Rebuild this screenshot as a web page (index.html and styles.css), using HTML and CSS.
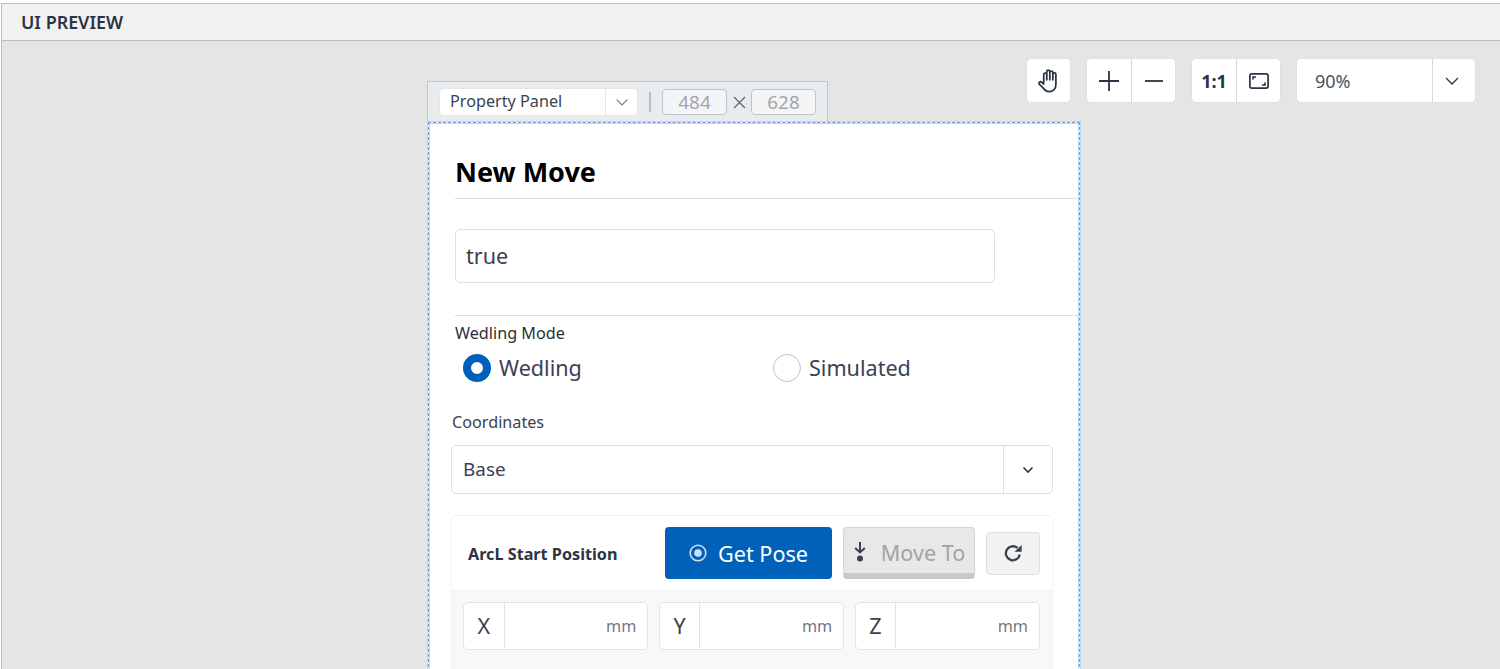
FILE: index.html
```html
<!DOCTYPE html>
<html lang="en">
<head>
<meta charset="utf-8">
<title>UI Preview</title>
<link rel="stylesheet" href="styles.css">
</head>
<body>
<div class="app">
  <header class="head">UI PREVIEW</header>
  <main class="canvas">
    <div class="tools">
      <div class="group"><button class="tool w43"><svg width="26" height="28" viewBox="0 0 22 24" fill="none" stroke="#2b3445" stroke-width="1.5" stroke-linecap="round" stroke-linejoin="round"><path d="M6.5 13V6.5a1.3 1.3 0 0 1 2.6 0V4a1.3 1.3 0 0 1 2.6 0v.8a1.3 1.3 0 0 1 2.6 0v1.6a1.3 1.3 0 0 1 2.6 0V15c0 3.6-2.4 6-5.6 6-2.6 0-4-1-5.300-3L2.600 14.600c-.8-1.400 1-2.600 2.200-1.500L6.500 14.600M9.100 6.500V11M11.700 4.800V11M14.300 6.400V11"/></svg></button></div>
      <div class="group"><button class="tool w44"><svg width="20" height="20" viewBox="0 0 20 20" stroke="#2b3445" stroke-width="1.800"><path d="M10 0v20M0 10h20"/></svg></button><button class="tool w44 sep"><svg width="18" height="20" viewBox="0 0 18 20" stroke="#2b3445" stroke-width="1.800"><path d="M0 10h18"/></svg></button></div>
      <div class="group"><button class="tool w44 ratio">1:1</button><button class="tool w44 sep"><svg width="20" height="16" viewBox="0 0 20 16" fill="none" stroke="#2b3445" stroke-width="1.700"><rect x=".9" y=".9" width="18.200" height="14.200" rx="2"/><path d="M4 6.500V4h3M16 9.500V12h-3"/></svg></button></div>
      <div class="group zoom"><span class="zoom-val">90%</span><button class="tool zoom-arrow sep"><svg width="14" height="8" viewBox="0 0 14 8" fill="none" stroke="#2b3445" stroke-width="1.300"><path d="M1 1l6 6 6-6"/></svg></button></div>
    </div>

    <div class="board">
      <div class="tagbar">
        <div class="picker"><span class="picker-text">Property Panel</span><span class="picker-arrow"><svg width="12" height="7" viewBox="0 0 12 7" fill="none" stroke="#6b7488" stroke-width="1.100"><path d="M.7.7 6 6l5.300-5.300"/></svg></span></div>
        <span class="pipe"></span>
        <span class="size">484</span>
        <svg class="times" width="13" height="13" viewBox="0 0 13 13" stroke="#5b6270" stroke-width="1.200"><path d="M1 1l11 11M12 1L1 12"/></svg>
        <span class="size">628</span>
      </div>
      <div class="panel">
        <h1 class="title">New Move</h1>
        <div class="text-field">true</div>
        <hr class="rule">
        <div class="mode-label">Wedling Mode</div>
        <div class="radios">
          <label class="radio"><span class="dot on"></span>Wedling</label>
          <label class="radio"><span class="dot"></span>Simulated</label>
        </div>
        <div class="coord-label">Coordinates</div>
        <div class="select"><span class="select-text">Base</span><span class="select-arrow"><svg width="12" height="8" viewBox="0 0 12 8" fill="none" stroke="#2b3445" stroke-width="1.600"><path d="M1.500 1.500 6 6l4.500-4.500"/></svg></span></div>
        <section class="card">
          <div class="card-head">
            <span class="card-title">ArcL Start Position</span>
            <button class="btn primary"><svg width="18" height="18" viewBox="0 0 18 18"><circle cx="9" cy="9" r="7.800" fill="none" stroke="#cfe0f3" stroke-width="1.600"/><circle cx="9" cy="9" r="3.800" fill="#cfe0f3"/></svg>Get Pose</button>
            <button class="btn disabled"><svg width="14" height="20" viewBox="0 0 14 20" fill="none" stroke="#3a4150" stroke-width="2"><path d="M7 0v11M2.200 6 7 10.500 11.800 6"/><circle cx="7" cy="16.500" r="3" fill="#3a4150" stroke="none"/></svg>Move To</button>
            <button class="btn refresh"><svg width="20" height="20" viewBox="0 0 20 20" fill="none" stroke="#3a4150" stroke-width="2.300"><path d="M16.800 11.500A7 7 0 1 1 14.500 5"/><path d="M11.500 8.700h7.200V2z" fill="#3a4150" stroke="none"/></svg></button>
          </div>
          <div class="card-body">
            <div class="axis"><span class="axis-name">X</span><span class="axis-unit">mm</span></div>
            <div class="axis"><span class="axis-name">Y</span><span class="axis-unit">mm</span></div>
            <div class="axis"><span class="axis-name">Z</span><span class="axis-unit">mm</span></div>
          </div>
        </section>
      </div>
    </div>
  </main>
</div>
</body>
</html>
```

FILE: styles.css
```css
* { box-sizing: border-box; }
html, body { margin: 0; height: 100%; overflow: hidden; }
body { font-family: "Noto Sans", sans-serif; color: #2b3445; background: #fff; }
button { font-family: inherit; padding: 0; margin: 0; border: 0; background: none; color: inherit; }

.app { height: 669px; padding: 3px 0 0 1px; display: flex; flex-direction: column; }
.head {
  height: 38px; flex: none; background: #f1f1f1;
  border-top: 1px solid #bcbcbc; border-bottom: 1px solid #bcbcbc; border-left: 1px solid #bcbcbc;
  padding: 0 0 0 19px; font-size: 17.9px; font-weight: 600; line-height: 36px; color: #2b3445;
}
.canvas { flex: 1; position: relative; background: #e5e5e5; border-left: 1px solid #bcbcbc; overflow: hidden; }

.tools { position: absolute; top: 17px; right: 24px; display: flex; gap: 15px; }
.group { display: flex; height: 45px; background: #fff; border: 1px solid #dde1e6; border-radius: 5px; }
.tool { display: flex; align-items: center; justify-content: center; height: 100%; }
.w43 { width: 43px; }
.w44 { width: 44px; }
.sep { border-left: 1px solid #d4d9e0; }
.ratio { font-size: 18px; font-weight: 700; }
.zoom { width: 180px; }
.zoom-val { flex: 1; padding: 2px 0 0 18px; font-size: 18px; line-height: 41px; color: #4a5263; }
.zoom-arrow { width: 43px; padding: 1px 4px 0 0; }

.board { position: absolute; left: 425px; top: 40px; width: 653px; }
.tagbar {
  width: 401px; height: 41px; background: #e9ecef; border: 1px solid #c6c8cb; border-bottom: 0;
  display: flex; align-items: center; padding: 0 11px;
}
.picker { width: 199px; height: 28px; background: #fff; border: 1px solid #e3e6ea; border-radius: 4px; display: flex; }
.picker-text { flex: 1; padding-left: 10px; font-size: 16.2px; line-height: 25px; color: #3c4350; }
.picker-arrow { width: 32px; border-left: 1px solid #e4e7eb; display: flex; align-items: center; justify-content: center; }
.pipe { width: 2px; height: 20px; background: #b8bbc0; margin: 0 11px 0 11px; }
.size {
  width: 65px; height: 26px; border: 1px solid #c0c3c8; border-radius: 4px; background: #f4f5f6;
  text-align: center; font-size: 18.9px; line-height: 25px; color: #a3a6ab;
}
.times { margin: 0 5px 0 6px; }

.panel {
  margin-left: 1px; height: 560px; background: #fff; padding: 0 1px 0 0;
  border: 1px dashed #6a9fdb; outline: 1px solid #b5d8fa;
  box-shadow: inset 0 0 0 1px #b5d8fa;
}
.title {
  margin: 0 0 0 26px; height: 76px; padding-top: 28px; font-size: 27px; line-height: 42px; font-weight: 700; color: #000;
  border-bottom: 1px solid #dcdcdc;
}
.text-field {
  width: 540px; height: 54px; margin: 30px 0 0 26px; border: 1px solid #dcdfe4; border-radius: 5px;
  padding-left: 10px; font-size: 21.6px; line-height: 52px; color: #3a4252;
}
.rule { margin: 32px 0 0 26px; height: 1px; border: 0; background: #dcdcdc; }
.mode-label { margin: 7px 0 0 26px; font-size: 16.2px; line-height: 21px; color: #2b2f38; }
.radios { display: flex; margin: 10px 0 0 34px; }
.radio { flex: none; width: 310px; display: flex; align-items: center; gap: 8px; font-size: 21.6px; line-height: 28px; color: #3a4252; }
.dot { width: 28px; height: 28px; border-radius: 50%; border: 1px solid #bfc2c7; background: #fff; }
.dot.on { border: 8px solid #0061bb; }
.coord-label { margin: 30px 0 0 23px; font-size: 16.2px; line-height: 21px; color: #3a4252; }
.select {
  width: 602px; height: 49px; margin: 12px 0 0 22px; display: flex;
  border: 1px solid #dcdfe4; border-radius: 5px;
}
.select-text { flex: 1; padding-left: 11px; font-size: 18.9px; line-height: 46px; color: #3a4252; }
.select-arrow { width: 49px; border-left: 1px solid #dcdfe4; display: flex; align-items: center; justify-content: center; }

.card { width: 602px; height: 200px; margin: 21px 0 0 22px; border: 1px solid #f2f3f4; border-radius: 5px 5px 0 0; }
.card-head { height: 75px; display: flex; align-items: center; padding: 0 12px 0 16px; border-bottom: 1px solid #f1f2f3; }
.card-title { width: 197px; padding-top: 2px; font-size: 16.2px; font-weight: 700; color: #2b3445; }
.btn { display: flex; align-items: center; justify-content: center; font-size: 21.6px; height: 52px; border-radius: 4px; }
.primary { width: 167px; background: #0061bb; color: #fff; gap: 11px; }
.disabled {
  width: 132px; margin-left: 11px; background: #e8e8e8; color: #a3a3a3; gap: 14px;
  border: 1px solid #d4d4d4; border-bottom: 6px solid #c9c9c9; padding-top: 3px;
}
.refresh { width: 54px; height: 43px; margin-left: 11px; background: #f2f2f2; border: 1px solid #dfdfdf; }
.card-body { height: 125px; background: #f8f8f8; display: flex; gap: 10.5px; padding: 11px 12px 0 11px; align-items: flex-start; }
.axis { flex: 1; height: 48px; display: flex; background: #fff; border: 1px solid #e1e3e7; border-radius: 5px; }
.axis-name { width: 40.6px; border-right: 1px solid #e1e3e7; text-align: center; font-size: 21.6px; line-height: 46px; color: #3a4252; }
.axis-unit { flex: 1; text-align: right; padding-right: 11px; font-size: 16.2px; line-height: 46px; color: #73777e; }
```
